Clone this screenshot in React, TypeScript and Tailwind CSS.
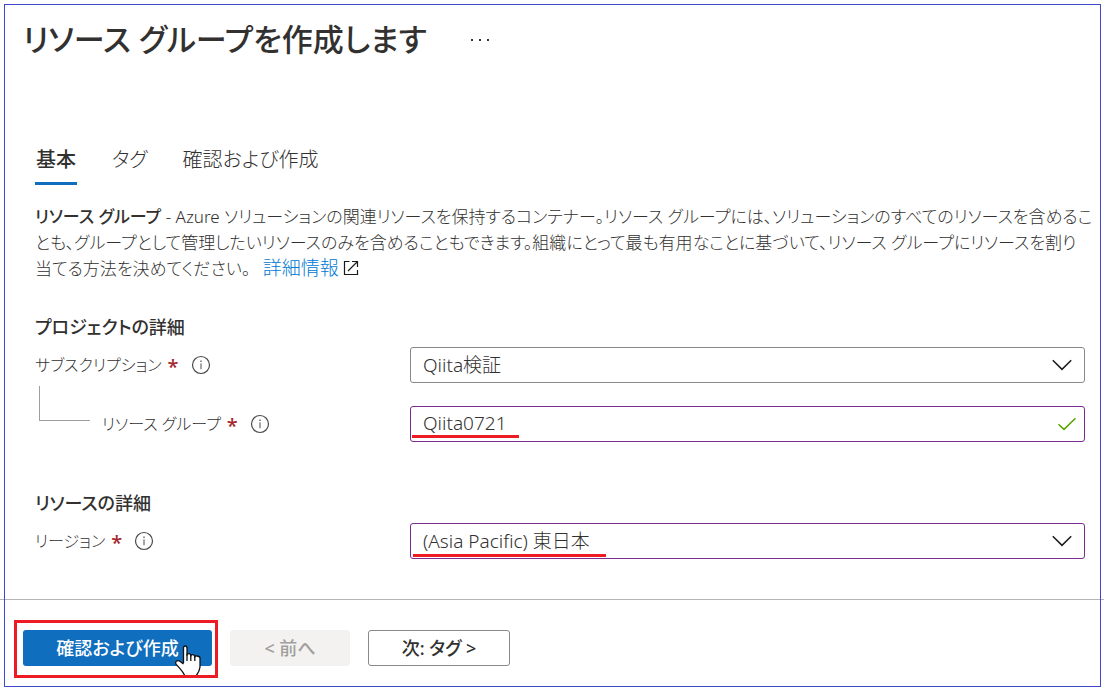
import type { ReactNode } from "react";

function InfoIcon() {
  return (
    <svg className="size-5 shrink-0" viewBox="0 0 20 20" fill="none" stroke="#4a4a4a" aria-hidden="true">
      <circle cx="10" cy="10" r="8.5" strokeWidth="1.2" />
      <path d="M10 8.4V14.2" strokeWidth="1" />
      <path d="M10 5.6V6.9" strokeWidth="1.2" />
    </svg>
  );
}

function ChevronIcon() {
  return (
    <svg
      className="pointer-events-none absolute top-1/2 right-[13px] size-5 -translate-y-1/2"
      viewBox="0 0 20 20"
      fill="none"
      stroke="#1b1a19"
      strokeWidth="1.5"
      aria-hidden="true"
    >
      <path d="M0.8 5.2 10 14.4 19.2 5.2" />
    </svg>
  );
}

function CheckIcon() {
  return (
    <svg
      className="pointer-events-none absolute top-1/2 right-2 size-5 -translate-y-1/2"
      viewBox="0 0 20 20"
      fill="none"
      stroke="#57a300"
      strokeWidth="1.5"
      aria-hidden="true"
    >
      <path d="M1.5 10.2 7 15.4 18.5 4.2" />
    </svg>
  );
}

function ExternalLinkIcon() {
  return (
    <svg className="ml-1 inline-block size-4 align-[-1px]" viewBox="0 0 16 16" fill="none" stroke="#1b1a19" strokeWidth="1.2" aria-hidden="true">
      <path d="M6.5 1.5H1.5V14.5H14.5V10" />
      <path d="M9 1.5H14.5V7M14.5 1.5 5 11" />
    </svg>
  );
}

function HandPointer() {
  return (
    <svg
      className="pointer-events-none absolute right-3 bottom-0 h-[30px] w-7"
      viewBox="0 0 28 30"
      fill="#fff"
      stroke="#111"
      strokeWidth="1.3"
      strokeLinejoin="round"
      aria-hidden="true"
    >
      <path d="M8.5 18V3Q8.5 1 10.2 1Q12 1 12 3V10Q12 8.6 13.8 8.6Q15.6 8.6 15.8 10.4V11Q16 9.4 17.8 9.6Q19.6 9.8 19.8 11.4V12Q20.2 10.8 22 11Q24.8 11.3 25 13V22Q24.6 26 21 31H10Q8 27 5 23.6L1.2 19.4Q-0.2 17 2 15.8Q3.6 15.2 5.2 16.4L8.5 19" />
      <path d="M12 9V16M15.8 10V16M19.8 11V16" fill="none" />
    </svg>
  );
}

function FieldRow({ id, label, nested, children }: { id: string; label: string; nested?: boolean; children: ReactNode }) {
  return (
    <div className="flex items-center">
      <div className="flex h-9 w-[375px] shrink-0 items-center text-base">
        {nested && <span className="-mt-5 mr-3 ml-1 h-[35px] w-[51px] self-start border-b border-l border-[#a19f9d]" />}
        <label htmlFor={id} className="flex items-center gap-1.5">
          {label}
          <span className="h-6 text-xl leading-7 font-medium text-[#a4262c]">*</span>
        </label>
        <span className="ml-3">
          <InfoIcon />
        </span>
      </div>
      <div className="relative flex-1">{children}</div>
    </div>
  );
}

const tabs = ["基本", "タグ", "確認および作成"];

export default function App() {
  return (
    <div className="relative min-h-screen bg-white font-['Noto_Sans','Noto_Sans_CJK_JP',sans-serif] text-[#323130] [font-feature-settings:'palt']">
      <main className="pr-[19px] pl-[35px]">
        <header className="-ml-3 flex items-center gap-11 pt-[15px]">
          <h1 className="text-[31px] leading-[48px] font-medium">リソース グループを作成します</h1>
          <button type="button" aria-label="その他" className="mt-0.5 flex gap-1.5">
            <span className="size-0.5 bg-[#323130]" />
            <span className="size-0.5 bg-[#323130]" />
            <span className="size-0.5 bg-[#323130]" />
          </button>
        </header>

        <nav role="tablist" className="mt-[79px] flex gap-[35px] text-xl leading-9">
          {tabs.map((tab, i) => (
            <button
              key={tab}
              type="button"
              role="tab"
              aria-selected={i === 0}
              className={i === 0 ? "border-b-3 border-[#106ebe] px-px pb-1 font-medium" : "border-b-3 border-transparent pb-1 font-light"}
            >
              {tab}
            </button>
          ))}
        </nav>

        <p className="mt-[19px] -mr-3 text-[17px] leading-[26px] font-light">
          <strong className="font-medium">リソース グループ</strong> - Azure
          ソリューションの関連リソースを保持するコンテナー。リソース グループには、ソリューションのすべてのリソースを含めることも、グループとして管理したいリソースのみを含めることもできます。組織にとって最も有用なことに基づいて、リソース グループにリソースを割り<br />
          当てる方法を決めてください。{" "}
          <a href="#details" className="ml-2 text-[19px] leading-none text-[#0078d4]">詳細情報<ExternalLinkIcon /></a>
        </p>

        <section className="mt-[31px] font-light">
          <h2 className="text-lg leading-7 font-medium">プロジェクトの詳細</h2>
          <div className="mt-1.5 flex flex-col gap-[23px]">
            <FieldRow id="subscription" label="サブスクリプション">
              <select id="subscription" className="block h-9 w-full appearance-none rounded-[3px] border border-[#8a8886] bg-white px-3 text-[19px]">
                <option>Qiita検証</option>
              </select>
              <ChevronIcon />
            </FieldRow>
            <FieldRow id="group" label="リソース グループ" nested>
              <input id="group" defaultValue="Qiita0721" className="block h-9 w-full rounded-[3px] border border-[#7a2c8f] bg-white px-3 pb-0.5 text-[19px]" />
              <CheckIcon />
              <span className="absolute bottom-1 left-0.5 h-[3px] w-[107px] bg-[#ed1c24]" />
            </FieldRow>
          </div>
        </section>

        <section className="mt-[47px] font-light">
          <h2 className="text-lg leading-7 font-medium">リソースの詳細</h2>
          <div className="mt-1.5">
            <FieldRow id="region" label="リージョン">
              <select id="region" className="block h-9 w-full appearance-none rounded-[3px] border border-[#7a2c8f] bg-white px-3 text-[19px]">
                <option>(Asia Pacific) 東日本</option>
              </select>
              <ChevronIcon />
              <span className="absolute bottom-0.5 left-[3px] h-[3px] w-[193px] bg-[#ed1c24]" />
            </FieldRow>
          </div>
        </section>
      </main>

      <footer className="mt-10 flex items-start border-t border-[#b5b5b5] pt-5 pb-[11px] pl-3.5 text-lg font-medium">
        <div className="relative border-3 border-[#ed1c24] pt-[7px] pr-[3px] pb-[9px] pl-1.5">
          <button type="button" className="block h-9 w-[189px] rounded-[3px] bg-[#106ebe] text-white">
            確認および作成
          </button>
          <HandPointer />
        </div>
        <button type="button" disabled className="mt-2.5 ml-3 h-9 w-[120px] rounded-[3px] bg-[#f3f2f1] text-[#a19f9d]">
          &lt; 前へ
        </button>
        <button type="button" className="mt-2.5 ml-[18px] h-9 w-[142px] rounded-[3px] border border-[#8a8886] bg-white">
          次: タグ &gt;
        </button>
      </footer>

      <div className="pointer-events-none absolute top-1 right-[3px] bottom-0.5 left-1 border border-[#3f48cc]" />
    </div>
  );
}
